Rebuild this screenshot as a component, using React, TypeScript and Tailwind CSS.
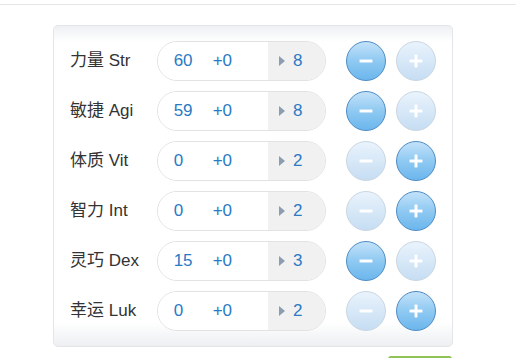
import { Minus, Plus } from "lucide-react";

type Stat = {
  label: string;
  value: number;
  bonus: string;
  cost: number;
  canDec: boolean;
  canInc: boolean;
};

const stats: Stat[] = [
  { label: "力量 Str", value: 60, bonus: "+0", cost: 8, canDec: true, canInc: false },
  { label: "敏捷 Agi", value: 59, bonus: "+0", cost: 8, canDec: true, canInc: false },
  { label: "体质 Vit", value: 0, bonus: "+0", cost: 2, canDec: false, canInc: true },
  { label: "智力 Int", value: 0, bonus: "+0", cost: 2, canDec: false, canInc: true },
  { label: "灵巧 Dex", value: 15, bonus: "+0", cost: 3, canDec: true, canInc: false },
  { label: "幸运 Luk", value: 0, bonus: "+0", cost: 2, canDec: false, canInc: true },
];

function RoundButton({ active, children }: { active: boolean; children: React.ReactNode }) {
  return (
    <button
      className={
        active
          ? "flex h-[40px] w-[40px] items-center justify-center rounded-full border border-[#4d8cc4] bg-[linear-gradient(180deg,#c3e2f9_0%,#8fc9f2_50%,#6cb6ed_100%)] text-white"
          : "flex h-[40px] w-[40px] items-center justify-center rounded-full border border-[#c9d6e2] bg-[linear-gradient(180deg,#e9f3fc_0%,#d7e8f7_50%,#c6ddf3_100%)] text-white"
      }
    >
      {children}
    </button>
  );
}

function StatRow({ stat }: { stat: Stat }) {
  return (
    <div className="flex h-[40px] items-center">
      <div className="w-[87px] text-[17px] text-[#333]">{stat.label}</div>
      <div className="flex h-[40px] w-[170px] overflow-hidden rounded-full border border-[#e2e2e2] text-[17px] text-[#2a7ac4]">
        <div className="flex flex-1 items-center bg-white pl-[16px]">
          <span className="w-[39px]">{stat.value}</span>
          <span>{stat.bonus}</span>
        </div>
        <div className="flex w-[57px] items-center bg-[#f1f1f1] pl-[11px]">
          <span className="mr-[8px] h-0 w-0 border-y-[5px] border-l-[6px] border-y-transparent border-l-[#8c9db1]" />
          <span>{stat.cost}</span>
        </div>
      </div>
      <div className="ml-[20px] flex gap-[10px]">
        <RoundButton active={stat.canDec}>
          <Minus size={22} strokeWidth={3.2} strokeLinecap="butt" />
        </RoundButton>
        <RoundButton active={stat.canInc}>
          <Plus size={22} strokeWidth={3.2} strokeLinecap="butt" />
        </RoundButton>
      </div>
    </div>
  );
}

export default function App() {
  return (
    <div className="h-[358px] w-[517px] overflow-hidden bg-white font-['Liberation_Sans','Noto_Sans_CJK_SC',sans-serif]">
      <div className="mt-[4px] h-px w-[516px] bg-[#e6e6e6]" />
      <div className="ml-[53px] mt-[20px] flex w-[400px] flex-col">
        <div className="flex flex-col gap-[10px] rounded-[5px] border border-[#e4e5e8] bg-[linear-gradient(180deg,#eef0f3_0px,#ffffff_16px,#ffffff_calc(100%-24px),#edeff2_100%)] px-[16px] py-[15px]">
          {stats.map((s) => (
            <StatRow key={s.label} stat={s} />
          ))}
        </div>
        <div className="mr-[1px] mt-[9px] h-[30px] w-[64px] self-end rounded-t-[3px] bg-[#8fc257]" />
      </div>
    </div>
  );
}
